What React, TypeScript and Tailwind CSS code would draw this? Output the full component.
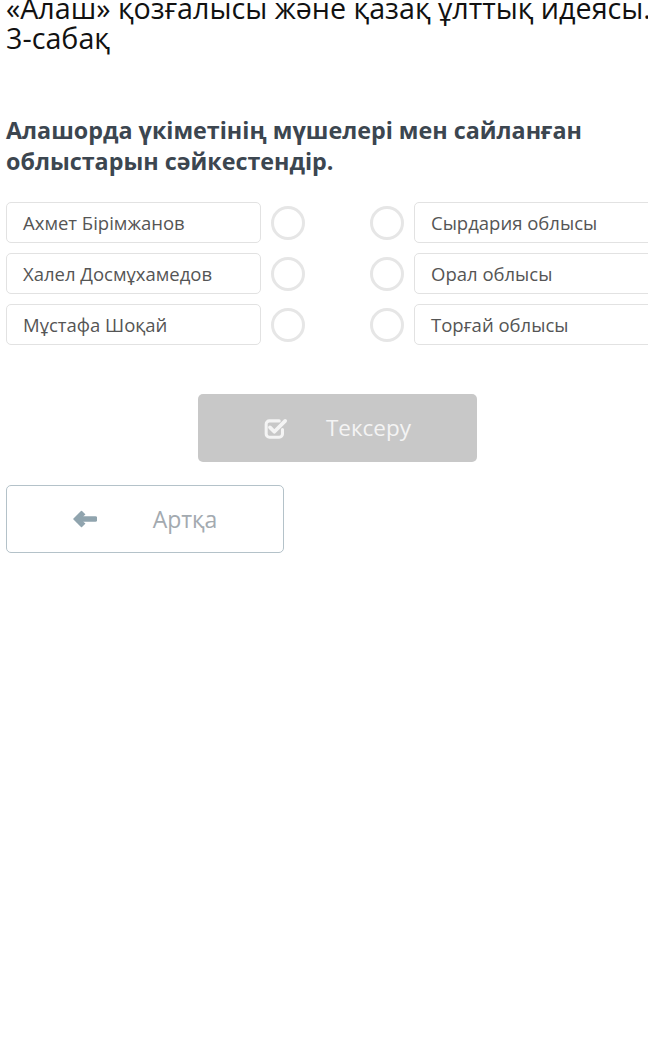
const left = ["Ахмет Бірімжанов", "Халел Досмұхамедов", "Мұстафа Шоқай"];
const right = ["Сырдария облысы", "Орал облысы", "Торғай облысы"];

function Circle() {
  return <div className="h-[34px] w-[34px] shrink-0 rounded-full border-[3px] border-[#e6e6e6] bg-white" />;
}

function Item({ text }: { text: string }) {
  return (
    <div className="flex h-[41px] w-[255px] shrink-0 items-center rounded-[5px] border border-[#e2e2e2] bg-white pl-4 text-[18.5px] text-[#555]">
      {text}
    </div>
  );
}

function CheckIcon() {
  return (
    <svg width="25" height="21" viewBox="0 0 23 19" fill="none">
      <path
        d="M14 2.5H5a3 3 0 0 0-3 3v9a3 3 0 0 0 3 3h9a3 3 0 0 0 3-3v-4"
        stroke="#f4f4f4"
        strokeWidth="2.8"
        strokeLinecap="round"
      />
      <path d="M5.5 8.5l4 4 10-10" stroke="#f4f4f4" strokeWidth="3.4" strokeLinecap="round" strokeLinejoin="round" />
    </svg>
  );
}

function ArrowIcon() {
  return (
    <svg width="24" height="18" viewBox="0 0 24 18">
      <path
        d="M1 9 L8.5 1.5 L11.5 4.5 L8 7 H22.5 a1 1 0 0 1 1 1 V10 a1 1 0 0 1-1 1 H8 L11.5 13.5 L8.5 16.5 Z"
        fill="#90a4ae"
        stroke="#90a4ae"
        strokeWidth="1.5"
        strokeLinejoin="round"
      />
    </svg>
  );
}

export default function App() {
  return (
    <div className="h-[1050px] w-[648px] overflow-hidden bg-white" style={{ fontFamily: '"Open Sans", sans-serif' }}>
      <div className="w-[675px] px-[6px]">
        <h1 className="-mt-[7px] whitespace-nowrap text-[28.7px] leading-[30px] text-[#111]">
          «Алаш» қозғалысы және қазақ ұлттық идеясы.
          <br />
          3-сабақ
        </h1>

        <h2 className="mt-[62px] text-[23.3px] font-bold leading-[31px] text-[#3c4650]">
          Алашорда үкіметінің мүшелері мен сайланған
          <br />
          облыстарын сәйкестендір.
        </h2>

        <div className="mt-[25px] flex flex-col gap-[10px]">
          {left.map((l, i) => (
            <div key={l} className="flex items-center">
              <Item text={l} />
              <div className="ml-[10px]">
                <Circle />
              </div>
              <div className="ml-[65px]">
                <Circle />
              </div>
              <div className="ml-[10px]">
                <Item text={right[i]} />
              </div>
            </div>
          ))}
        </div>

        <div className="mt-[49px] flex justify-center">
          <button className="flex h-[68px] w-[279px] items-center justify-center rounded-[5px] bg-[#c8c8c8] text-[22.5px] text-[#f4f4f4]">
            <CheckIcon />
            <span className="ml-[37px]">Тексеру</span>
          </button>
        </div>

        <button className="mt-[23px] flex h-[68px] w-[278px] items-center justify-center rounded-[5px] border border-[#b4c2c9] bg-white text-[23px] text-[#a3aab0]">
          <ArrowIcon />
          <span className="ml-[56px]">Артқа</span>
        </button>
      </div>
    </div>
  );
}
